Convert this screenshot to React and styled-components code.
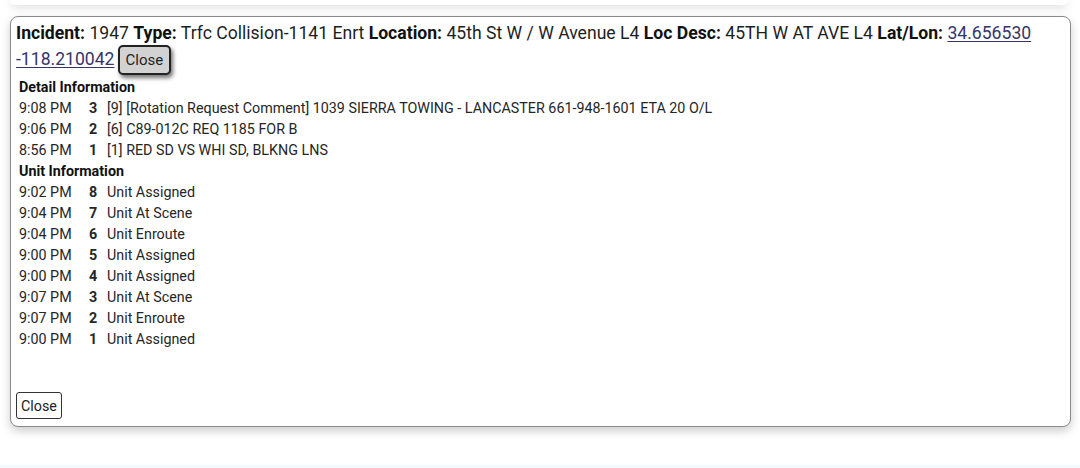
import React from "react"
import styled, { createGlobalStyle } from "styled-components"

const GlobalStyle = createGlobalStyle`
  html, body {
    margin: 0;
    padding: 0;
    background: #ffffff;
  }
  body {
    font-family: Roboto, "Noto Sans", "Liberation Sans", sans-serif;
    color: #222222;
  }
`

const incident = {
  number: "1947",
  type: "Trfc Collision-1141 Enrt",
  location: "45th St W / W Avenue L4",
  locDesc: "45TH W AT AVE L4",
  lat: "34.656530",
  lon: "-118.210042",
}

const details = [
  { time: "9:08 PM", seq: 3, text: "[9] [Rotation Request Comment] 1039 SIERRA TOWING - LANCASTER 661-948-1601 ETA 20 O/L" },
  { time: "9:06 PM", seq: 2, text: "[6] C89-012C REQ 1185 FOR B" },
  { time: "8:56 PM", seq: 1, text: "[1] RED SD VS WHI SD, BLKNG LNS" },
]

const units = [
  { time: "9:02 PM", seq: 8, text: "Unit Assigned" },
  { time: "9:04 PM", seq: 7, text: "Unit At Scene" },
  { time: "9:04 PM", seq: 6, text: "Unit Enroute" },
  { time: "9:00 PM", seq: 5, text: "Unit Assigned" },
  { time: "9:00 PM", seq: 4, text: "Unit Assigned" },
  { time: "9:07 PM", seq: 3, text: "Unit At Scene" },
  { time: "9:07 PM", seq: 2, text: "Unit Enroute" },
  { time: "9:00 PM", seq: 1, text: "Unit Assigned" },
]

const Page = styled.div`
  padding: 0 9px 0 10px;
`

const PrevCard = styled.div`
  height: 5px;
  margin-right: 3px;
  background: #ffffff;
  border-radius: 0 0 8px 8px;
  box-shadow: 0 2px 8px rgba(0, 0, 0, 0.18);
`

const Card = styled.div`
  margin-top: 11px;
  background: #ffffff;
  border: 1px solid #8a8a8a;
  border-radius: 8px;
  padding: 5px 5px 7px 5px;
  box-shadow: 0 4px 10px rgba(0, 0, 0, 0.2);
`

const Header = styled.div`
  font-size: 17.6px;
  line-height: 23px;
  color: #1e1e1e;
`

const Label = styled.b`
  font-weight: 700;
  color: #111111;
`

const CoordLink = styled.a`
  color: #35356a;
  text-decoration: underline;
  text-underline-offset: 2px;
`

const RaisedClose = styled.button`
  font-family: Roboto, "Noto Sans", "Liberation Sans", sans-serif;
  font-size: 15px;
  color: #222222;
  height: 30px;
  padding: 0 6px;
  margin-left: 3px;
  background: #d2d2d2;
  border: 2px solid #222222;
  border-radius: 5px;
  box-shadow: 2px 3px 4px rgba(0, 0, 0, 0.55);
  vertical-align: baseline;
  cursor: pointer;
`

const Body = styled.div`
  margin-top: 2px;
  padding: 0 3px;
  font-size: 14.3px;
  line-height: 21px;
`

const SectionTitle = styled.div`
  font-weight: 700;
  color: #111111;
`

const Row = styled.div`
  display: grid;
  grid-template-columns: 70px 10px 1fr;
  color: #262626;
`

const Time = styled.span``

const Seq = styled.span`
  font-weight: 700;
  text-align: right;
  padding-right: 3px;
`

const Text = styled.span`
  padding-left: 8px;
  white-space: nowrap;
`

const Footer = styled.div`
  margin-top: 42px;
`

const PlainClose = styled.button`
  font-family: Roboto, "Noto Sans", "Liberation Sans", sans-serif;
  font-size: 14.3px;
  color: #222222;
  height: 27px;
  padding: 0 4px;
  background: #ffffff;
  border: 1px solid #333333;
  border-radius: 3px;
  cursor: pointer;
`

const NextStrip = styled.div`
  margin-top: 38px;
  height: 10px;
  background: #f4fafb;
`

const LogRows = ({ rows }) =>
  rows.map((r, i) => (
    <Row key={i}>
      <Time>{r.time}</Time>
      <Seq>{r.seq}</Seq>
      <Text>{r.text}</Text>
    </Row>
  ))

const App = () => (
  <>
    <GlobalStyle />
    <Page>
      <PrevCard />
      <Card>
        <Header>
          <Label>Incident:</Label> {incident.number} <Label>Type:</Label> {incident.type}{" "}
          <Label>Location:</Label> {incident.location} <Label>Loc Desc:</Label> {incident.locDesc}{" "}
          <Label>Lat/Lon:</Label>{" "}
          <CoordLink href="#">
            {incident.lat} {incident.lon}
          </CoordLink>
          <RaisedClose>Close</RaisedClose>
        </Header>
        <Body>
          <SectionTitle>Detail Information</SectionTitle>
          <LogRows rows={details} />
          <SectionTitle>Unit Information</SectionTitle>
          <LogRows rows={units} />
        </Body>
        <Footer>
          <PlainClose>Close</PlainClose>
        </Footer>
      </Card>
    </Page>
    <NextStrip />
  </>
)

export default App
